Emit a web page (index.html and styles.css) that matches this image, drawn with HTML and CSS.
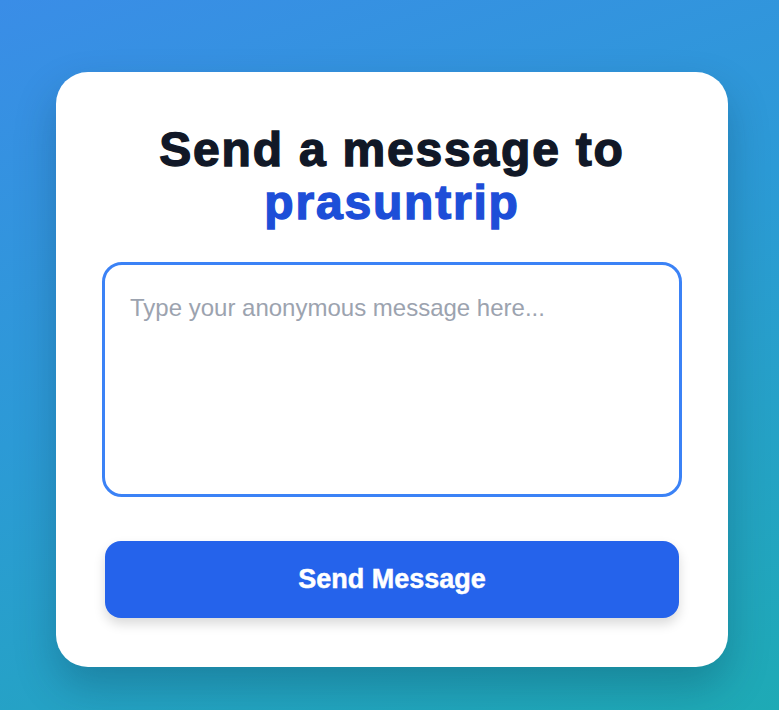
FILE: index.html
```html
<!DOCTYPE html>
<html lang="en">
<head>
<meta charset="utf-8">
<title>Send a message</title>
<link rel="stylesheet" href="styles.css">
</head>
<body>
<main class="page">
  <section class="card">
    <h1 class="title">Send a message to <span class="name">prasuntrip</span></h1>
    <textarea class="message" placeholder="Type your anonymous message here..."></textarea>
    <button class="send" type="button">Send Message</button>
  </section>
</main>
</body>
</html>
```
FILE: styles.css
```css
* { box-sizing: border-box; }
html, body { margin: 0; height: 100%; }
body {
  font-family: "Liberation Sans", Arial, sans-serif;
  background: linear-gradient(160deg, #3a8de7 0%, #2c9ad6 45%, #1eaab5 100%);
  min-height: 710px;
}
.page {
  padding: 72px 51px 43px 56px;
}
.card {
  width: 672px;
  background: #ffffff;
  border-radius: 32px;
  padding: 52px 46px 49px;
  box-shadow: 0 20px 40px rgba(0, 40, 60, 0.25);
}
.title {
  margin: 0;
  font-size: 48px;
  line-height: 1.1;
  font-weight: 700;
  letter-spacing: 1.8px;
  text-align: center;
  color: #111827;
  -webkit-text-stroke: 1.4px #111827;
}
.name {
  color: #1d4ed8;
  -webkit-text-stroke: 1.4px #1d4ed8;
}
.message {
  display: block;
  width: 100%;
  height: 235px;
  margin: 32px 0 44px;
  padding: 25px 25px;
  border: 3px solid #3b82f6;
  border-radius: 20px;
  font-family: "Liberation Sans", Arial, sans-serif;
  font-size: 24px;
  line-height: 1.5;
  color: #111827;
  resize: none;
  outline: none;
  background: #fff;
}
.message::placeholder {
  color: #9ca3af;
}
.send {
  display: block;
  width: calc(100% - 6px);
  margin: 0 auto;
  height: 77px;
  border: none;
  border-radius: 16px;
  background: #2563eb;
  color: #ffffff;
  font-family: "Liberation Sans", Arial, sans-serif;
  font-size: 27px;
  font-weight: 700;
  -webkit-text-stroke: 0.5px #ffffff;
  box-shadow: 0 6px 12px rgba(0, 0, 0, 0.15);
  cursor: pointer;
}
```
